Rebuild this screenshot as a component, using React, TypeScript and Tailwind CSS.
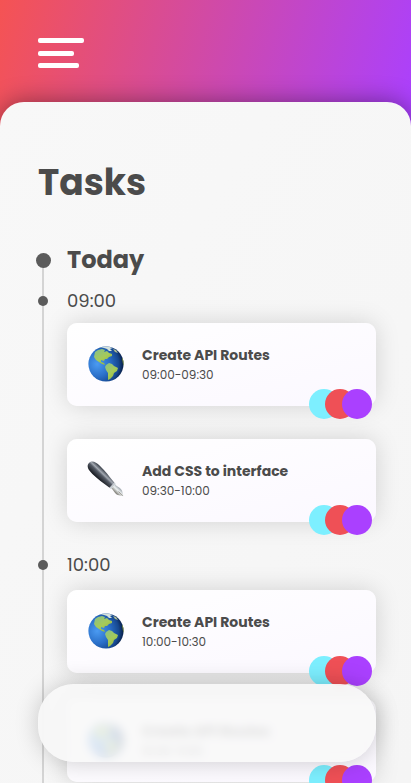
import React from "react";

type Task = { title: string; time: string; icon: "globe" | "pen" };
type Slot = { hour: string; spacing: string; tasks: Task[] };

const slots: Slot[] = [
  {
    hour: "09:00",
    spacing: "mt-px gap-[33px]",
    tasks: [
      { title: "Create API Routes", time: "09:00-09:30", icon: "globe" },
      { title: "Add CSS to interface", time: "09:30-10:00", icon: "pen" },
    ],
  },
  {
    hour: "10:00",
    spacing: "mt-1 gap-[26px]",
    tasks: [
      { title: "Create API Routes", time: "10:00-10:30", icon: "globe" },
      { title: "Create API Routes", time: "10:30-11:00", icon: "globe" },
    ],
  },
];

function Globe() {
  const id = React.useId();
  return (
    <svg viewBox="0 1 36 36" className="size-9 shrink-0 overflow-visible" aria-hidden="true">
      <defs>
        <radialGradient id={`${id}sea`} cx="0.25" cy="0.5" r="0.72">
          <stop offset="0" stopColor="#4b9bf2" />
          <stop offset="0.5" stopColor="#2a6fc8" />
          <stop offset="0.85" stopColor="#164890" />
          <stop offset="1" stopColor="#0b2654" />
        </radialGradient>
        <linearGradient id={`${id}land`} x1="0" y1="0" x2="0.7" y2="1">
          <stop offset="0" stopColor="#86bf8c" />
          <stop offset="0.6" stopColor="#a6ca58" />
          <stop offset="1" stopColor="#93b540" />
        </linearGradient>
        <clipPath id={`${id}clip`}>
          <circle cx="18" cy="18" r="17.6" />
        </clipPath>
      </defs>
      <circle cx="18" cy="18" r="17.6" fill={`url(#${id}sea)`} />
      <g clipPath={`url(#${id}clip)`}>
        <path
          d="M7 6 10 4 14 3 17 4 16 6 19 5 21 7 24 8 24 10 21 11 19 13 17 13 16 15 13 14 13 16 16 17 17 19 14 18 11 16 8 14 6 11Z"
          fill={`url(#${id}land)`}
        />
        <path
          d="M18 19 21 17 24 18 26 20 30 22 29 25 26 27 25 30 22 33 20 34 20 30 20 27 18 24 17 21Z"
          fill={`url(#${id}land)`}
        />
        <path d="M34 12 37 13 37 22 35 18Z" fill="#8aa03c" />
        <path d="M12 1 18 0 25 2 22 3 24 5 21 5 19 3 16 2Z" fill="#d5e2dc" />
        <path d="M25 3 28 4 30 7 27 6Z" fill="#a9b890" />
      </g>
    </svg>
  );
}

function Pen() {
  const id = React.useId();
  return (
    <svg viewBox="0 1 36 36" className="size-9 shrink-0 overflow-visible" aria-hidden="true">
      <defs>
        <linearGradient id={`${id}barrel`} x1="0" y1="0" x2="0" y2="1">
          <stop offset="0" stopColor="#343a44" />
          <stop offset="0.32" stopColor="#a2a8b1" />
          <stop offset="0.5" stopColor="#555b66" />
          <stop offset="1" stopColor="#14171d" />
        </linearGradient>
        <linearGradient id={`${id}nib`} x1="0" y1="0" x2="0" y2="1">
          <stop offset="0" stopColor="#9aa1a8" />
          <stop offset="0.45" stopColor="#eef3f4" />
          <stop offset="1" stopColor="#77756d" />
        </linearGradient>
      </defs>
      <g transform="translate(1 1) rotate(44)">
        <path d="M0 0C0-4 4-5.5 10-5.5C17-5.5 24-4.5 32-3.5V3.5C24 4.5 17 5.5 10 5.5C4 5.5 0 4 0 0Z" fill={`url(#${id}barrel)`} />
        <path d="M32-3.5H34V3.5H32Z" fill="#c5cbd0" />
        <path d="M34-2.5C38-3 41-4 43-3L48 0 43 3C41 4 38 3 34 2.5Z" fill={`url(#${id}nib)`} />
        <path d="M41 0H47" stroke="#7a7266" strokeWidth="0.6" />
      </g>
    </svg>
  );
}

function TaskCard({ task }: { task: Task }) {
  return (
    <li className="relative flex h-[83px] items-center gap-[18px] rounded-[10px] bg-linear-to-br from-white to-[#fbf8ff] pl-[21px] shadow-[0_0_25px_rgba(0,0,0,0.15)]">
      {task.icon === "globe" ? <Globe /> : <Pen />}
      <div>
        <h3 className="text-sm leading-5 font-bold">{task.title}</h3>
        <p className="text-xs leading-5">{task.time}</p>
      </div>
      <div className="absolute right-1 -bottom-[13px] flex">
        <span className="size-[30px] rounded-full bg-[#7defff]" />
        <span className="-ml-[14px] size-[30px] rounded-full bg-[#ef5056]" />
        <span className="-ml-[13px] size-[30px] rounded-full bg-[#aa40ff]" />
      </div>
    </li>
  );
}

export default function App() {
  return (
    <div className="flex h-dvh flex-col overflow-hidden bg-[linear-gradient(105deg,#f55353_0%,#aa40ff_100%)] bg-[length:100%_130px] bg-no-repeat font-[Poppins,Inter,sans-serif] text-[#4b4b4b] antialiased">
      <header className="h-[102px] shrink-0 pt-[38px] pl-[38px]">
        <button type="button" aria-label="Open menu" className="block">
          <svg width="46" height="30" viewBox="0 0 46 30" fill="white" aria-hidden="true">
            <rect width="46" height="5" rx="2" />
            <rect y="13" width="36" height="5" rx="2" />
            <rect y="25" width="41" height="5" rx="2" />
          </svg>
        </button>
      </header>

      <main className="min-h-0 grow overflow-hidden rounded-t-3xl bg-linear-to-br from-[#f8f8f8] to-[#f5f5f5] pr-[35px] pl-9 shadow-[0_0_25px_rgba(0,0,0,0.4)]">
        <h1 className="mt-14 pl-0.5 text-4xl leading-[50px] font-bold">Tasks</h1>

        <section className="relative mt-8">
          <div className="absolute top-5 left-1.5 h-screen w-0.5 bg-[#d4d4d4]" />
          <div className="relative flex h-10 items-center gap-4">
            <span className="size-[15px] rounded-full bg-[#5b5b5b]" />
            <h2 className="text-2xl font-bold">Today</h2>
          </div>

          {slots.map((slot) => (
            <div key={slot.hour} className="mb-[22px]">
              <div className="relative flex h-[42px] items-center gap-4">
                <span className="flex w-[15px] pl-0.5">
                  <span className="size-2.5 rounded-full bg-[#5b5b5b]" />
                </span>
                <h3 className="text-lg">{slot.hour}</h3>
              </div>
              <ul className={`ml-[31px] flex flex-col ${slot.spacing}`}>
                {slot.tasks.map((task) => (
                  <TaskCard key={task.time} task={task} />
                ))}
              </ul>
            </div>
          ))}
        </section>
      </main>

      <nav
        aria-label="Main"
        className="fixed right-[35px] bottom-[21px] left-[38px] h-[78px] rounded-[36px] bg-[#f8f8f8]/85 shadow-[0_0_25px_rgba(0,0,0,0.2)] backdrop-blur-[5px]"
      />
    </div>
  );
}
